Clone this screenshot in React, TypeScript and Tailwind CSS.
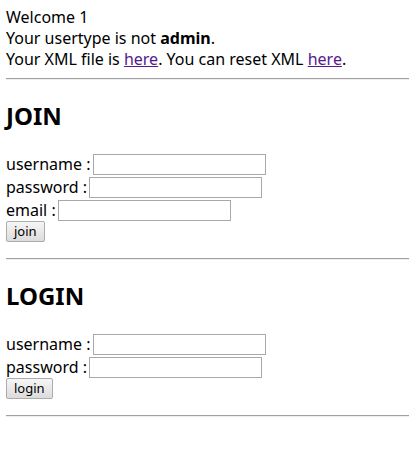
export default function App() {
  return (
    <div className="min-h-[464px] bg-white pl-[6px] pt-[7px] font-['Noto_Sans',sans-serif] text-[16px] leading-[21px] text-black">
      <div>Welcome 1</div>
      <div>
        Your usertype is not <b>admin</b>.
      </div>
      <div>
        Your XML file is <a href="#" className="text-[#551a8b] underline">here</a>. You can reset XML{' '}
        <a href="#" className="text-[#551a8b] underline">here</a>.
      </div>
      <hr className="mt-[8px] border-t border-b border-t-[#a0a0a0] border-b-[#eeeeee]" />

      <Section title="JOIN" fields={['username', 'password', 'email']} button="join" />
      <hr className="mt-[16px] border-t border-b border-t-[#a0a0a0] border-b-[#eeeeee]" />

      <Section title="LOGIN" fields={['username', 'password']} button="login" />
      <hr className="mt-[16px] border-t border-b border-t-[#a0a0a0] border-b-[#eeeeee]" />
    </div>
  );
}

function Section({ title, fields, button }: { title: string; fields: string[]; button: string }) {
  return (
    <div>
      <h2 className="mt-[20px] text-[24px] font-bold leading-[32px]">{title}</h2>
      <div className="mt-[22px] flex flex-col gap-[2px]">
        {fields.map((f) => (
          <div key={f} className="flex h-[21px] items-center gap-[2px]">
            <span>{f} :</span>
            <input
              type={f === 'password' ? 'password' : 'text'}
              className="h-[21px] w-[173px] border border-[#a9a9a9] bg-white px-[2px] text-[13px] outline-none"
            />
          </div>
        ))}
      </div>
      <button className="flex h-[21px] items-center rounded-[2px] border border-[#acacac] bg-gradient-to-b from-[#f6f6f6] to-[#dcdcdc] px-[7px] text-[13px] leading-none">
        {button}
      </button>
    </div>
  );
}
